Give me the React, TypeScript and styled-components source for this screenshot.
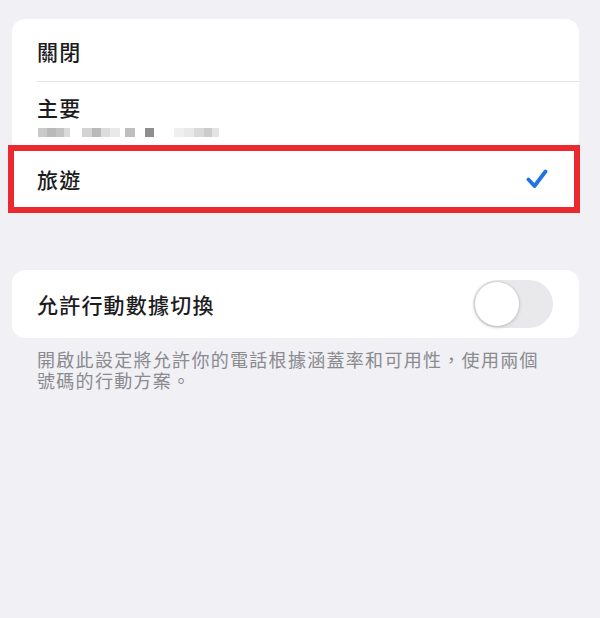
import styled, { createGlobalStyle } from "styled-components";

const GlobalStyle = createGlobalStyle`
  html, body {
    margin: 0;
    padding: 0;
    background-color: #f0f0f5;
  }
  body {
    font-family: "Noto Sans CJK TC", "Noto Sans", sans-serif;
    color: #1c1c1e;
  }
`;

const Page = styled.div`
  width: 600px;
  height: 618px;
  box-sizing: border-box;
  padding: 19px 21px 0 12px;
  display: flex;
  flex-direction: column;
`;

const Card = styled.div<{ $gap?: number }>`
  background-color: #ffffff;
  border-radius: 13px;
  display: flex;
  flex-direction: column;
  margin-top: ${(props) => props.$gap ?? 0}px;
`;

const Row = styled.div<{ $height: number; $divider?: boolean; $highlight?: boolean }>`
  position: relative;
  height: ${(props) => props.$height}px;
  box-sizing: border-box;
  padding: 0 26px 0 25px;
  display: flex;
  align-items: center;
  justify-content: space-between;
  ${(props) =>
    props.$divider &&
    `
    &::after {
      content: "";
      position: absolute;
      left: 25px;
      right: 0;
      bottom: 0;
      height: 1px;
      background-color: #e4e4e8;
    }
  `}
  ${(props) =>
    props.$highlight &&
    `
    &::before {
      content: "";
      position: absolute;
      left: -4px;
      right: -1px;
      top: -2px;
      bottom: -2px;
      border: 6px solid #ea2a2f;
      box-sizing: border-box;
      pointer-events: none;
    }
  `}
`;

const Stack = styled.div`
  display: flex;
  flex-direction: column;
  gap: 8px;
  padding-top: 2px;
`;

const Label = styled.span`
  font-size: 21px;
  font-weight: 500;
  letter-spacing: 1.2px;
  line-height: 26px;
  color: #1c1c1e;
`;

const Mosaic = styled.div`
  display: flex;
  height: 9px;
  margin-left: -25px;
`;

const Pixel = styled.div<{ $color: string; $width: number; $gap?: number }>`
  width: ${(props) => props.$width}px;
  height: 9px;
  background-color: ${(props) => props.$color};
  margin-left: ${(props) => props.$gap ?? 0}px;
`;

const Check = styled.svg`
  width: 22px;
  height: 20px;
  margin-right: 5px;
`;

const Toggle = styled.div`
  width: 80px;
  height: 48px;
  border-radius: 24px;
  background-color: #e9e9ec;
  box-sizing: border-box;
  padding: 2px;
  display: flex;
  align-items: center;
`;

const Knob = styled.div`
  width: 44px;
  height: 44px;
  border-radius: 50%;
  background-color: #ffffff;
  box-shadow: 0 1px 4px rgba(0, 0, 0, 0.18), 0 0 0 1px rgba(0, 0, 0, 0.04);
`;

const Footer = styled.p`
  margin: 11px 0 0 25px;
  width: 510px;
  font-size: 18px;
  letter-spacing: 1.3px;
  line-height: 21px;
  color: #8a8a8f;
`;

const pixels = [
  { c: "#c9c9c9", w: 9, g: 26 },
  { c: "#b9b9b9", w: 9 },
  { c: "#c3c3c3", w: 8 },
  { c: "#dadada", w: 6 },
  { c: "#d3d3d3", w: 10, g: 12 },
  { c: "#b9b9b9", w: 9 },
  { c: "#dcdcdc", w: 9 },
  { c: "#e9e9e9", w: 10 },
  { c: "#bfbfbf", w: 10, g: 5 },
  { c: "#8e8e8e", w: 9, g: 10 },
  { c: "#efefef", w: 10, g: 20 },
  { c: "#e9e9e9", w: 10 },
  { c: "#d9d9d9", w: 10 },
  { c: "#cccccc", w: 8 },
  { c: "#e3e3e3", w: 7 },
];

const App = () => {
  return (
    <>
      <GlobalStyle />
      <Page>
        <Card>
          <Row $height={63} $divider>
            <Label>關閉</Label>
          </Row>
          <Row $height={65}>
            <Stack>
              <Label>主要</Label>
              <Mosaic>
                {pixels.map((p, i) => (
                  <Pixel key={i} $color={p.c} $width={p.w} $gap={p.g} />
                ))}
              </Mosaic>
            </Stack>
          </Row>
          <Row $height={64} $highlight>
            <Label>旅遊</Label>
            <Check viewBox="0 0 22 20">
              <path
                d="M2.5 10.5 L8.5 17 L19.5 2.5"
                fill="none"
                stroke="#1f74e0"
                strokeWidth="3.8"
                strokeLinecap="round"
                strokeLinejoin="round"
              />
            </Check>
          </Row>
        </Card>

        <Card $gap={59}>
          <Row $height={68}>
            <Label>允許行動數據切換</Label>
            <Toggle>
              <Knob />
            </Toggle>
          </Row>
        </Card>

        <Footer>
          開啟此設定將允許你的電話根據涵蓋率和可用性，使用兩個號碼的行動方案。
        </Footer>
      </Page>
    </>
  );
};

export default App;
